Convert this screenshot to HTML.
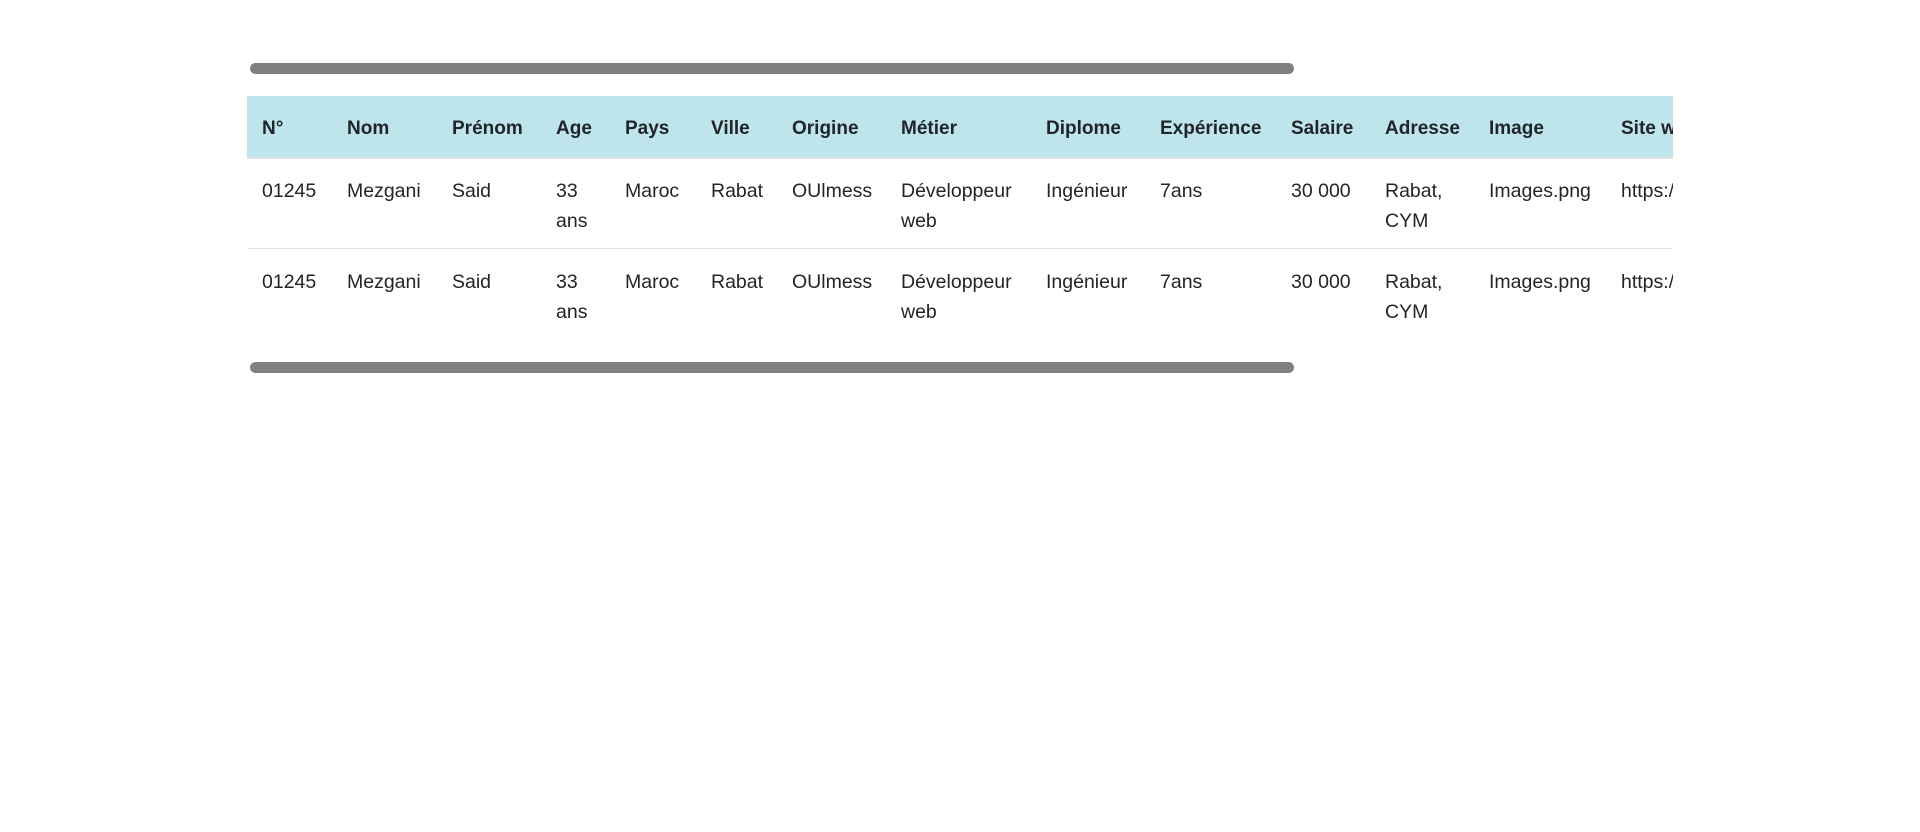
<!DOCTYPE html>
<html><head><meta charset="utf-8"><style>
body{margin:0;width:1920px;height:832px;background:#fff;position:relative;overflow:hidden;font-family:"Liberation Sans",sans-serif;color:#212529;font-size:19.5px}
.bar{position:absolute;left:250px;width:1044px;height:11px;background:#808080;border-radius:6px}
.wrap{position:absolute;left:247px;top:96px;width:1426px;height:250px;overflow:hidden}
.hd{position:absolute;left:0;top:0;width:1426px;height:61px;background:#bee5eb;border-bottom:2px solid #dee2e6}
.sep{position:absolute;left:0;top:152px;width:1426px;height:1px;background:#dee2e6}
.c{position:absolute;white-space:nowrap;line-height:30px}
.h{font-weight:bold;top:18px;font-size:19px}
</style></head><body>
<div class="bar" style="top:63px"></div>
<div class="wrap">
<div class="hd"></div><div class="sep"></div>
<div id="t"></div>
</div>
<div class="bar" style="top:362px"></div>
<script>
var xs=[15,100,205,309,378,464,545,654,799,913,1044,1138,1242,1374];
var hs=["N°","Nom","Prénom","Age","Pays","Ville","Origine","Métier","Diplome","Expérience","Salaire","Adresse","Image","Site web"];
var r=["01245","Mezgani","Said","33<br>ans","Maroc","Rabat","OUlmess","Développeur<br>web","Ingénieur","7ans","30 000","Rabat,<br>CYM","Images.png","https://"];
var h="";
for(var i=0;i<14;i++){
h+='<div class="c h" style="left:'+xs[i]+'px">'+hs[i]+'</div>';
h+='<div class="c" style="left:'+xs[i]+'px;top:80px">'+r[i]+'</div>';
h+='<div class="c" style="left:'+xs[i]+'px;top:171px">'+r[i]+'</div>';
}
document.getElementById('t').innerHTML=h;
</script>
</body></html>
